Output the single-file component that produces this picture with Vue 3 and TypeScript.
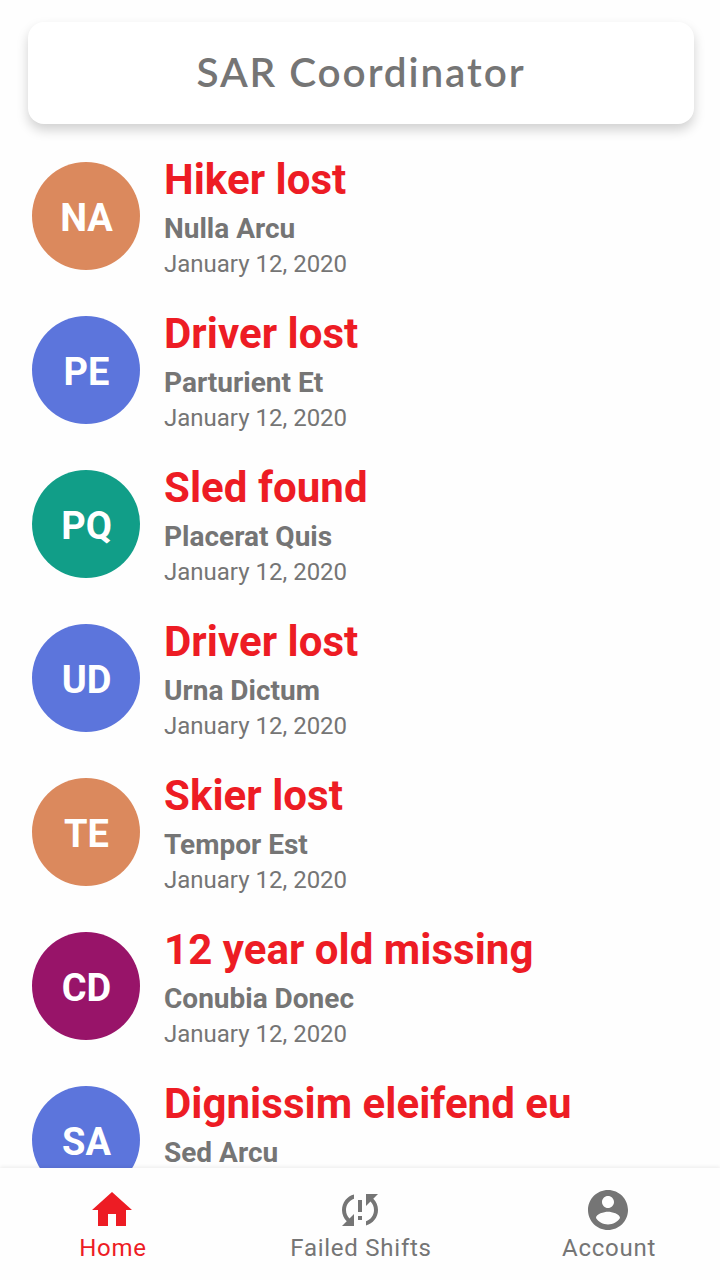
<script setup lang="ts">
interface Mission {
  title: string
  person: string
  initials: string
  date?: string
  tone: string
}

interface Tab {
  label: string
  icon: string
  active: boolean
}

const date = 'January 12, 2020'

const missions: Mission[] = [
  { title: 'Hiker lost', person: 'Nulla Arcu', initials: 'NA', date, tone: 'orange' },
  { title: 'Driver lost', person: 'Parturient Et', initials: 'PE', date, tone: 'blue' },
  { title: 'Sled found', person: 'Placerat Quis', initials: 'PQ', date, tone: 'green' },
  { title: 'Driver lost', person: 'Urna Dictum', initials: 'UD', date, tone: 'blue' },
  { title: 'Skier lost', person: 'Tempor Est', initials: 'TE', date, tone: 'orange' },
  { title: '12 year old missing', person: 'Conubia Donec', initials: 'CD', date, tone: 'purple' },
  { title: 'Dignissim eleifend eu', person: 'Sed Arcu', initials: 'SA', tone: 'blue' },
]

const tabs: Tab[] = [
  { label: 'Home', active: true, icon: 'M10 20v-6h4v6h5v-8h3L12 3 2 12h3v8z' },
  {
    label: 'Failed Shifts',
    active: false,
    icon: 'M3 12c0 2.21.91 4.2 2.36 5.64L3 20h6v-6l-2.24 2.24C5.68 15.15 5 13.66 5 12c0-2.61 1.67-4.83 4-5.65V4.26C5.55 5.15 3 8.27 3 12zm8 5h2v-2h-2v2zM21 4h-6v6l2.24-2.24C18.32 8.85 19 10.34 19 12c0 2.61-1.67 4.83-4 5.65v2.09c3.45-.89 6-4.01 6-7.74 0-2.21-.91-4.2-2.36-5.64L21 4zm-10 9h2V7h-2v6z',
  },
  {
    label: 'Account',
    active: false,
    icon: 'M12 2C6.48 2 2 6.48 2 12s4.48 10 10 10 10-4.48 10-10S17.52 2 12 2zm0 3c1.66 0 3 1.34 3 3s-1.34 3-3 3-3-1.34-3-3 1.34-3 3-3zm0 14.2c-2.5 0-4.71-1.28-6-3.22.03-1.99 4-3.08 6-3.08 1.99 0 5.97 1.09 6 3.08-1.29 1.94-3.5 3.22-6 3.22z',
  },
]
</script>

<template>
  <div class="screen">
    <header class="header">
      <h1 class="brand">SAR Coordinator</h1>
    </header>
    <main class="list">
      <article v-for="(m, i) in missions" :key="i" class="mission">
        <div class="avatar" :class="m.tone">{{ m.initials }}</div>
        <div class="details">
          <h2 class="title">{{ m.title }}</h2>
          <p class="person">{{ m.person }}</p>
          <p v-if="m.date" class="date">{{ m.date }}</p>
        </div>
      </article>
    </main>
    <nav class="tabs">
      <a v-for="t in tabs" :key="t.label" class="tab" :class="{ active: t.active }">
        <svg class="icon" viewBox="0 0 24 24"><path :d="t.icon" /></svg>
        <span class="label">{{ t.label }}</span>
      </a>
    </nav>
  </div>
</template>

<style>
body {
  margin: 0;
  background: #fefefe;
}
</style>

<style scoped>
.screen {
  display: flex;
  flex-direction: column;
  width: 720px;
  height: 1280px;
  overflow: hidden;
  background: #fefefe;
  color: #757575;
  font-family: Roboto, sans-serif;
}
.header {
  flex: none;
  box-sizing: border-box;
  display: flex;
  align-items: center;
  justify-content: center;
  height: 102px;
  margin: 22px 26px 0 28px;
  padding-bottom: 2px;
  border-radius: 16px;
  background: #fff;
  box-shadow: 0 6px 12px rgba(0, 0, 0, 0.18);
}
.brand {
  margin: 0;
  font: 600 40.5px/56px Lato, sans-serif;
  letter-spacing: 1.9px;
}
.list {
  flex: 1;
  min-height: 0;
  overflow: hidden;
  padding: 30px 32px 0;
}
.mission {
  display: flex;
  gap: 24px;
  height: 154px;
}
.avatar {
  flex: none;
  box-sizing: border-box;
  width: 108px;
  height: 108px;
  margin-top: 8px;
  padding-left: 1px;
  border-radius: 50%;
  color: #fff;
  font-size: 38px;
  font-weight: 700;
  line-height: 112px;
  text-align: center;
}
.orange { background: #db895d; }
.blue { background: #5c75dc; }
.green { background: #119e88; }
.purple { background: #981469; }
.title,
.person,
.date {
  margin: 0;
  white-space: nowrap;
}
.title {
  color: #ed1c24;
  font-size: 42px;
  font-weight: 700;
  line-height: 52px;
  letter-spacing: 0.04px;
}
.person {
  font-size: 28px;
  font-weight: 700;
  line-height: 46px;
}
.date {
  font-size: 24px;
  line-height: 24px;
}
.tabs {
  flex: none;
  display: grid;
  grid-template-columns: repeat(3, 248px);
  justify-content: center;
  height: 112px;
  background: #fefefe;
  box-shadow: 0 -1px 4px rgba(0, 0, 0, 0.08);
  z-index: 1;
}
.tab {
  display: flex;
  flex-direction: column;
  align-items: center;
  padding-top: 18px;
}
.active {
  color: #ed1c24;
}
.icon {
  width: 48px;
  height: 48px;
  fill: currentColor;
}
.label {
  padding-left: 2px;
  font-size: 24px;
  line-height: 28px;
  letter-spacing: 0.75px;
}
</style>
